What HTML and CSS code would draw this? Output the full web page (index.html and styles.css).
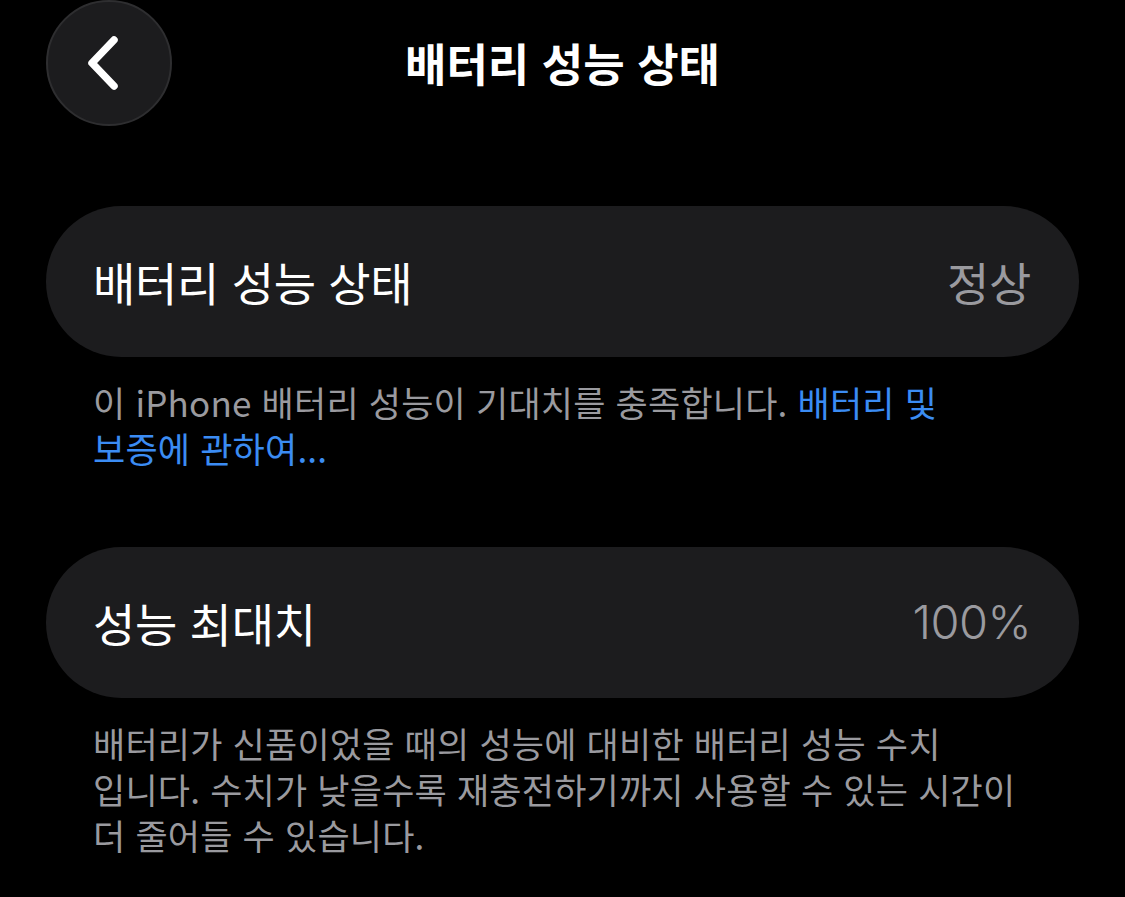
FILE: index.html
```html
<!DOCTYPE html>
<html lang="ko">
<head>
<meta charset="utf-8">
<title>배터리 성능 상태</title>
<link rel="stylesheet" href="styles.css">
</head>
<body>
<div class="page">
  <header class="nav">
    <button class="back" aria-label="뒤로">
      <svg width="40" height="60" viewBox="0 0 40 60" aria-hidden="true">
        <path d="M29 7 L7 30 L29 53" fill="none" stroke="#ffffff" stroke-width="7.5" stroke-linecap="round" stroke-linejoin="round"/>
      </svg>
    </button>
    <h1 class="title">배터리 성능 상태</h1>
    <div class="spacer"></div>
  </header>

  <section class="group first">
    <div class="row">
      <span class="label">배터리 성능 상태</span>
      <span class="value">정상</span>
    </div>
    <p class="note">이 iPhone 배터리 성능이 기대치를 충족합니다. <a class="link" href="#">배터리 및<br>보증에 관하여...</a></p>
  </section>

  <section class="group second">
    <div class="row">
      <span class="label">성능 최대치</span>
      <span class="value num">100%</span>
    </div>
    <p class="note">배터리가 신품이었을 때의 성능에 대비한 배터리 성능 수치<br>입니다. 수치가 낮을수록 재충전하기까지 사용할 수 있는 시간이<br>더 줄어들 수 있습니다.</p>
  </section>
</div>
</body>
</html>
```

FILE: styles.css
```css
html, body {
  margin: 0;
  padding: 0;
  background: #000000;
}

body {
  font-family: "Noto Sans CJK KR", "Noto Sans", sans-serif;
  color: #ffffff;
  width: 1125px;
  height: 897px;
  overflow: hidden;
}

.page {
  padding: 0 46px;
}

.nav {
  display: grid;
  grid-template-columns: 1fr auto 1fr;
  align-items: center;
  height: 126px;
}

.back {
  width: 126px;
  height: 126px;
  border-radius: 50%;
  background: #1c1c1e;
  border: 2px solid #2e2e30;
  box-sizing: border-box;
  display: flex;
  align-items: center;
  justify-content: center;
  padding: 0 8px 0 0;
  margin: 0;
}

.title {
  margin: 0 0 2px;
  font-size: 45px;
  font-weight: 700;
  letter-spacing: 0;
  line-height: 1;
  color: #ffffff;
}

.group.first {
  margin-top: 80px;
}

.group.second {
  margin-top: 76px;
}

.row {
  height: 151px;
  border-radius: 76px;
  background: #1c1c1e;
  display: flex;
  align-items: center;
  justify-content: space-between;
  padding: 0 48px 2px 47px;
  box-sizing: border-box;
}

.label {
  font-size: 46px;
  letter-spacing: -0.3px;
  color: #ffffff;
  line-height: 1;
}

.value {
  font-size: 46px;
  letter-spacing: -0.3px;
  color: #9a9a9f;
  line-height: 1;
}

.value.num {
  font-family: "Inter", "Noto Sans", sans-serif;
  font-weight: 300;
  font-size: 47px;
  letter-spacing: -0.5px;
}

.note {
  margin: 22px 0 0;
  padding: 0 47px;
  font-size: 35px;
  line-height: 46px;
  letter-spacing: 0.2px;
  color: #9a9a9f;
}

.link {
  color: #3b8cf3;
  text-decoration: none;
}
```
